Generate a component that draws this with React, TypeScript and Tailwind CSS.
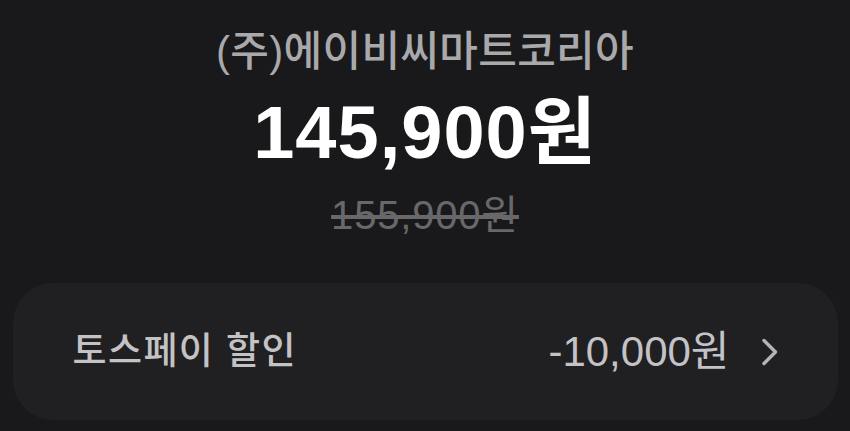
import React from 'react';

const App: React.FC = () => {
  return (
    <div
      className="w-[850px] h-[431px] overflow-hidden bg-[#19191b] flex flex-col items-center"
      style={{ fontFamily: '"Liberation Sans", "Noto Sans CJK KR", sans-serif' }}
    >
      <p className="mt-[27px] h-[50px] text-[42px] leading-[50px] font-medium text-[#a9a9ac] tracking-[0.3px] whitespace-nowrap">
        (주)에이비씨마트코리아
      </p>
      <p className="mt-[16px] h-[80px] text-[74px] leading-[80px] font-bold text-white tracking-[1px] whitespace-nowrap">
        145,900원
      </p>
      <p className="mt-[19px] h-[46px] text-[40px] leading-[46px] text-[#68686b] line-through tracking-[0.8px] whitespace-nowrap">
        155,900원
      </p>

      {/* discount row */}
      <div className="mt-[45px] w-[825px] h-[137px] shrink-0 rounded-[40px] bg-[#202022] flex items-center justify-between pl-[60px] pr-[58px]">
        <span className="text-[37px] font-medium text-[#c3c3c6] tracking-[1.4px] whitespace-nowrap">토스페이 할인</span>
        <div className="flex items-center gap-[30px]">
          <span className="text-[42px] text-[#c3c3c6] tracking-[0px] whitespace-nowrap">-10,000원</span>
          <svg width="20" height="30" viewBox="0 0 20 30" fill="none">
            <path d="M4 3.5l11.5 11.5-11.5 11.5" stroke="#b4b4b7" strokeWidth="3.4" strokeLinecap="round" strokeLinejoin="round" />
          </svg>
        </div>
      </div>
    </div>
  );
};

export default App;
